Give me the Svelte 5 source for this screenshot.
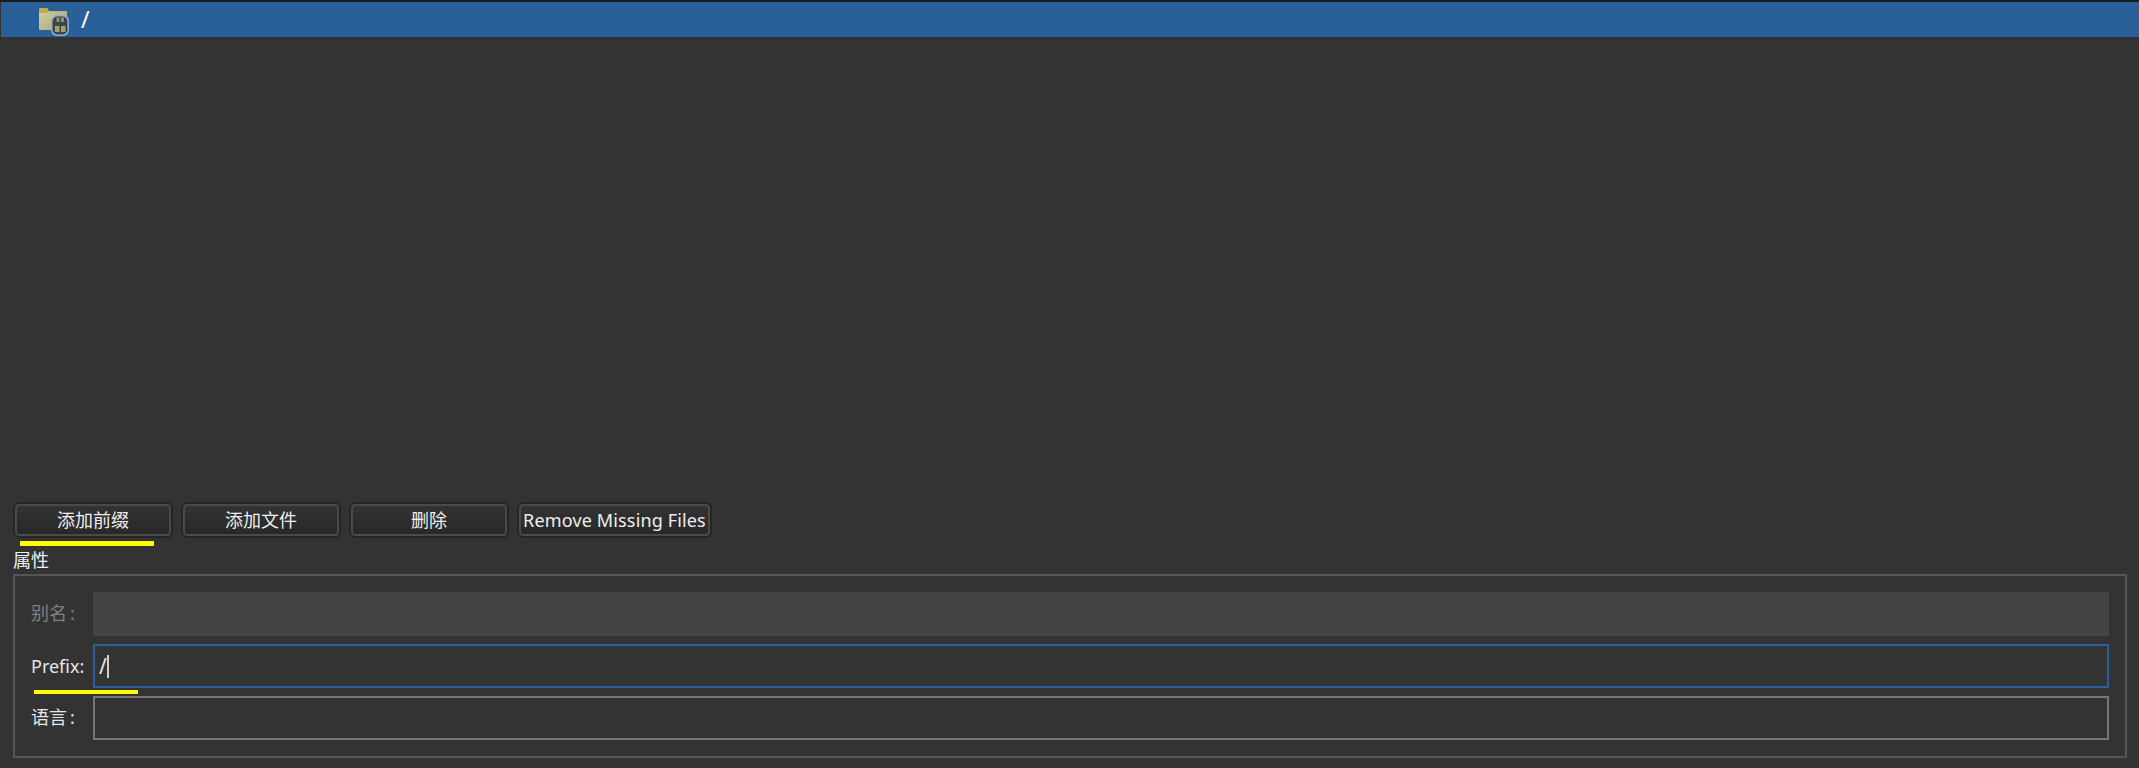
<script>
  const buttons = [
    { label: '添加前缀', wide: true, mark: true },
    { label: '添加文件', wide: true },
    { label: '删除', wide: true },
    { label: 'Remove Missing Files', wide: false }
  ];
</script>

<div class="page">
  <div class="tree">
    <div class="row">
      <svg class="icon" width="32" height="30" viewBox="0 0 32 30" aria-hidden="true">
        <defs>
          <linearGradient id="fold" x1="0" y1="0" x2="1" y2="1">
            <stop offset="0" stop-color="#d6d3a6" />
            <stop offset="1" stop-color="#a5a474" />
          </linearGradient>
        </defs>
        <path d="M0 1.5 Q0 0 1.5 0 H8 L10 3 H27 Q28 3 28 4 V21 Q28 22 27 22 H1 Q0 22 0 21 Z" fill="url(#fold)" />
        <path d="M0 5 V1.5 Q0 0 1.5 0 H8 L10 3.4 H28 V4.2 H9 Q8 5 7 5 Z" fill="#c3aa50" />
        <rect x="12" y="7" width="18" height="21" rx="6" fill="#8db0d6" />
        <rect x="13.5" y="8.5" width="15" height="18" rx="5" fill="#3e444e" />
        <rect x="17.5" y="9.5" width="3" height="4.5" fill="#97975a" />
        <rect x="22" y="9.5" width="3" height="4.5" fill="#97975a" />
        <rect x="16" y="18" width="4.5" height="6" fill="#a3a362" />
        <rect x="22" y="18" width="4.5" height="6" fill="#a3a362" />
      </svg>
      <span class="path">/</span>
    </div>
  </div>

  <div class="actions">
    {#each buttons as b}
      <button class="btn" class:wide={b.wide} type="button">
        {b.label}
        {#if b.mark}<span class="mark mark-btn"></span>{/if}
      </button>
    {/each}
  </div>

  <div class="title">属性</div>
  <div class="group">
    <div class="field">
      <span class="lab cjk disabled">别名<span class="colon">:</span></span>
      <div class="input off"></div>
    </div>
    <div class="field">
      <span class="lab">Prefix:<span class="mark mark-lab"></span></span>
      <div class="input focus"><span class="val">/</span><span class="caret"></span></div>
    </div>
    <div class="field">
      <span class="lab cjk">语言<span class="colon">:</span></span>
      <div class="input"></div>
    </div>
  </div>
</div>

<style>
  :global(body) {
    margin: 0;
    background: #333333;
  }
  .page {
    height: 768px;
    width: 2139px;
    box-sizing: border-box;
    display: flex;
    flex-direction: column;
    background: #333333;
    color: #efefef;
    font-family: "Noto Sans", "Noto Sans CJK SC", sans-serif;
    font-size: 18px;
    overflow: hidden;
  }
  .tree {
    flex: 1;
    min-height: 0;
    border-top: 2px solid #1c1c1c;
    padding-left: 1px;
  }
  .row {
    height: 35px;
    background: #2a6099;
    display: flex;
    align-items: center;
    padding-left: 38px;
    box-sizing: border-box;
  }
  .icon {
    display: block;
    margin-top: 7px;
    flex: none;
  }
  .path {
    margin-left: 10px;
    color: #ffffff;
    font-size: 23px;
    line-height: 1;
  }
  .actions {
    display: flex;
    gap: 8px;
    padding-left: 13px;
    height: 36px;
    flex: none;
  }
  .btn {
    position: relative;
    box-sizing: border-box;
    padding: 0;
    border: 2px solid #4a4a4a;
    border-radius: 4px;
    outline: 2px solid #262626;
    outline-offset: 0;
    margin: 2px;
    height: 32px;
    width: 191px;
    background: linear-gradient(#333333, #282828);
    color: #efefef;
    font: inherit;
    letter-spacing: 0.15px;
    line-height: 1;
    white-space: nowrap;
  }
  .btn.wide {
    width: 156px;
    letter-spacing: 0;
  }
  .mark {
    position: absolute;
    background: #ffff00;
    display: block;
  }
  .mark-btn {
    left: 3px;
    top: 35px;
    width: 134px;
    height: 5px;
  }
  .title {
    flex: none;
    margin: 9px 0 1px 13px;
    height: 26px;
    line-height: 26px;
  }
  .group {
    flex: none;
    box-sizing: border-box;
    margin: 0 12px 10px 13px;
    height: 184px;
    border: 2px solid #555555;
    padding: 16px;
    display: flex;
    flex-direction: column;
    gap: 8px;
  }
  .field {
    display: flex;
    align-items: center;
    height: 44px;
  }
  .lab {
    position: relative;
    width: 62px;
    flex: none;
    white-space: nowrap;
    color: #e6e6e6;
  }
  .lab.cjk {
    margin-top: -4px;
  }
  .lab.disabled {
    color: #808080;
  }
  .colon {
    margin-left: 3px;
  }
  .mark-lab {
    left: 3px;
    top: 36px;
    width: 104px;
    height: 4px;
  }
  .input {
    flex: 1;
    box-sizing: border-box;
    height: 44px;
    border: 2px solid #777777;
    display: flex;
    align-items: center;
    padding-left: 4px;
  }
  .input.off {
    background: #444444;
    border: none;
  }
  .input.focus {
    border-color: #2a6099;
  }
  .val {
    color: #e6e6e6;
    font-size: 21px;
    line-height: 1;
  }
  .caret {
    width: 2px;
    height: 23px;
    background: #d0d0d0;
  }
</style>
